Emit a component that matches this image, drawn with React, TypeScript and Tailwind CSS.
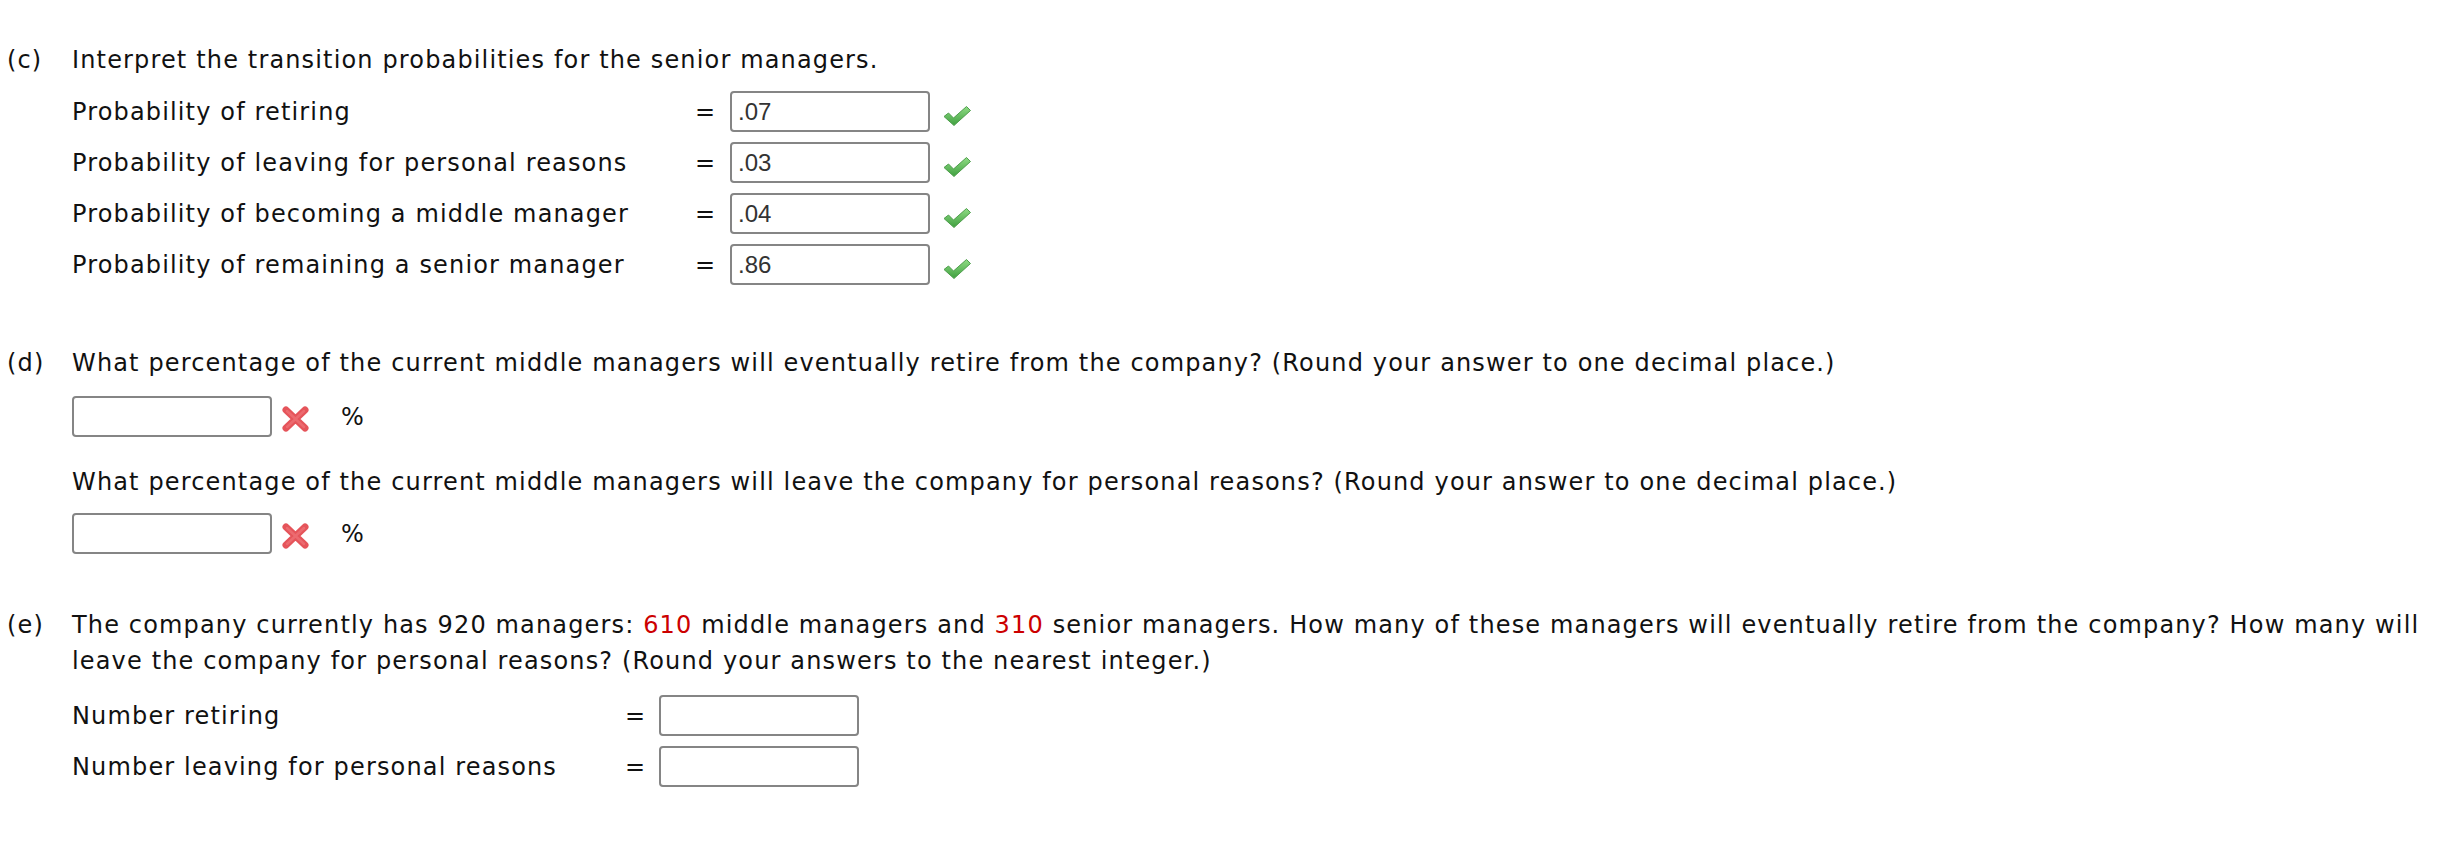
import React from 'react';

function Check() {
  return (
    <svg width="30" height="24" viewBox="0 0 30 24" className="mt-[9px]">
      <defs>
        <linearGradient id="chk" x1="0" y1="0" x2="0" y2="1">
          <stop offset="0" stopColor="#8fdc84" />
          <stop offset="1" stopColor="#3f9f3f" />
        </linearGradient>
      </defs>
      <path d="M2 12.5 L6.5 9 L11.5 14 L24.5 2.5 L28.5 6.5 L12 21.5 Z" fill="url(#chk)" stroke="#4e9e4c" strokeWidth="1" strokeLinejoin="round" />
    </svg>
  );
}

function Cross() {
  return (
    <svg width="29" height="26" viewBox="0 0 29 26" className="mt-[5px]">
      <path d="M5 4 L24 22 M24 4 L5 22" stroke="#e5545a" strokeWidth="7" strokeLinecap="round" />
      <path d="M6 5 L23 21 M23 5 L6 21" stroke="#f27a7e" strokeWidth="2.5" strokeLinecap="round" opacity="0.6" />
    </svg>
  );
}

function Box({ value = '' }: { value?: string }) {
  return (
    <input
      readOnly
      defaultValue={value}
      className="w-[200px] h-[41px] border-2 border-[#858585] rounded-[4px] bg-white px-[6px] font-['Liberation_Sans',sans-serif] text-[24px] tracking-normal text-[#333] outline-none"
    />
  );
}

const probRows = [
  { label: 'Probability of retiring', value: '.07' },
  { label: 'Probability of leaving for personal reasons', value: '.03' },
  { label: 'Probability of becoming a middle manager', value: '.04' },
  { label: 'Probability of remaining a senior manager', value: '.86' },
];

export default function App() {
  return (
    <div className="min-h-screen bg-white text-[#111] font-['DejaVu_Sans',Verdana,sans-serif] text-[24px] tracking-[1.15px] leading-[36px] pl-[7px] pt-[42px]">
      {/* (c) */}
      <div className="flex">
        <span className="w-[65px] shrink-0">(c)</span>
        <div>
          <p>Interpret the transition probabilities for the senior managers.</p>
          <div className="mt-[13px] flex flex-col gap-[10px]">
            {probRows.map((r) => (
              <div key={r.label} className="flex items-center h-[41px]">
                <span className="w-[623px] whitespace-nowrap">{r.label}</span>
                <span className="w-[35px]">=</span>
                <Box value={r.value} />
                <span className="ml-[12px]"><Check /></span>
              </div>
            ))}
          </div>
        </div>
      </div>

      {/* (d) */}
      <div className="flex mt-[60px]">
        <span className="w-[65px] shrink-0">(d)</span>
        <div>
          <p>What percentage of the current middle managers will eventually retire from the company? (Round your answer to one decimal place.)</p>
          <div className="mt-[15px] flex items-center h-[41px]">
            <Box />
            <span className="ml-[9px]"><Cross /></span>
            <span className="ml-[31px]">%</span>
          </div>
          <p className="mt-[27px]">What percentage of the current middle managers will leave the company for personal reasons? (Round your answer to one decimal place.)</p>
          <div className="mt-[13px] flex items-center h-[41px]">
            <Box />
            <span className="ml-[9px]"><Cross /></span>
            <span className="ml-[31px]">%</span>
          </div>
        </div>
      </div>

      {/* (e) */}
      <div className="flex mt-[53px] pb-[60px]">
        <span className="w-[65px] shrink-0">(e)</span>
        <div className="w-[2375px]">
          <p>
            The company currently has 920 managers: <span className="text-[#c00]">610</span> middle managers and{' '}
            <span className="text-[#c00]">310</span> senior managers. How many of these managers will eventually retire from the
            company? How many will leave the company for personal reasons? (Round your answers to the nearest integer.)
          </p>
          <div className="mt-[16px] flex flex-col gap-[10px]">
            {['Number retiring', 'Number leaving for personal reasons'].map((l) => (
              <div key={l} className="flex items-center h-[41px]">
                <span className="w-[553px] whitespace-nowrap">{l}</span>
                <span className="w-[34px]">=</span>
                <Box />
              </div>
            ))}
          </div>
        </div>
      </div>
    </div>
  );
}
